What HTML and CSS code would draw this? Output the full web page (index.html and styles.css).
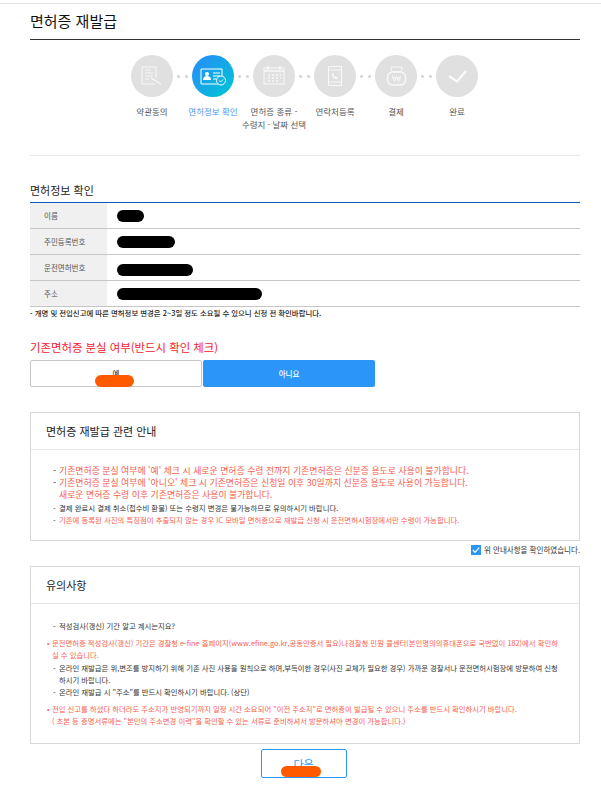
FILE: index.html
```html
<!DOCTYPE html>
<html lang="ko">
<head>
<meta charset="utf-8">
<title>면허증 재발급</title>
<link rel="stylesheet" href="styles.css">
</head>
<body>
<div class="page">
  <h1 class="title">면허증 재발급</h1>

  <div class="stepper">
    <div class="circles">
      <div class="circle"><svg viewBox="0 0 42 42"><g class="ic"><path d="M25 23V12H11v17h13"/><path d="M14 15h6M14 18h8M14 21h8M14 24h4"/><path d="M20 23l10 6" class="thick"/></g></svg></div>
      <div class="dots"><i></i><i></i></div>
      <div class="circle active"><svg viewBox="0 0 42 42"><g class="ic on"><path d="M26 29H9V14h21v7"/><circle cx="15" cy="19" r="2" class="solid"/><path d="M11 25c0-3 2-4 4-4s4 1 4 4z" class="solid"/><path d="M21 18h7M21 21h7M21 24h3"/><circle cx="29" cy="25.500" r="4.500"/><path d="M27 25.500l1.500 1.500 2.500-2.500"/></g></svg></div>
      <div class="dots"><i></i><i></i></div>
      <div class="circle"><svg viewBox="0 0 42 42"><g class="ic"><rect x="11" y="13" width="20" height="16"/><path d="M11 16h20M15 11v4M27 11v4" class="thick"/><path d="M15 20h2M19 20h2M23 20h2M27 20h1M15 23h2M19 23h2M23 23h2M27 23h1M15 26h2M19 26h2M23 26h2" class="thick"/></g></svg></div>
      <div class="dots"><i></i><i></i></div>
      <div class="circle"><svg viewBox="0 0 42 42"><g class="ic"><rect x="14.500" y="11.500" width="13" height="19"/><path d="M15 15h12M15 27h12"/><path d="M18 19c0 3 2 5 5 5l1-1.500-2-1-1 .5-1.500-1.500.5-1-1-2z" class="solid"/></g></svg></div>
      <div class="dots"><i></i><i></i></div>
      <div class="circle"><svg viewBox="0 0 42 42"><g class="ic"><path d="M16 12h11v3l-2 2h-7l-2-2z"/><rect x="12.500" y="17" width="18" height="13" rx="5" class="thick"/><path d="M17.500 20.500l2 6 2-5 2 5 2-6M17 23h9"/></g></svg></div>
      <div class="dots"><i></i><i></i></div>
      <div class="circle"><svg viewBox="0 0 42 42"><path d="M13 21l8 5.500 9-10.500" class="check"/></svg></div>
    </div>
    <div class="labels">
      <div class="label">약관동의</div>
      <div class="label current">면허정보 확인</div>
      <div class="label">면허증 종류 -<br>수령지 · 날짜 선택</div>
      <div class="label">연락처등록</div>
      <div class="label">결제</div>
      <div class="label">완료</div>
    </div>
  </div>

  <h2 class="section-title">면허정보 확인</h2>
  <div class="info">
    <div class="row"><div class="key">이름</div><div class="val"><span class="mask m1"></span></div></div>
    <div class="row"><div class="key">주민등록번호</div><div class="val"><span class="mask m2"></span></div></div>
    <div class="row"><div class="key">운전면허번호</div><div class="val"><span class="mask m3"></span></div></div>
    <div class="row"><div class="key">주소</div><div class="val"><span class="mask m4"></span></div></div>
  </div>
  <p class="note">- 개명 및 전입신고에 따른 면허정보 변경은 2~3일 정도 소요될 수 있으니 신청 전 확인바랍니다.</p>

  <h2 class="lost-title">기존면허증 분실 여부(반드시 확인 체크)</h2>
  <div class="choice">
    <button class="btn yes">예<span class="blot b1"></span></button>
    <button class="btn no">아니요</button>
  </div>

  <section class="box guide">
    <h3 class="box-title">면허증 재발급 관련 안내</h3>
    <ul class="list">
      <li class="big red">기존면허증 분실 여부에 '예' 체크 시 새로운 면허증 수령 전까지 기존면허증은 신분증 용도로 사용이 불가합니다.</li>
      <li class="big red">기존면허증 분실 여부에 '아니오' 체크 시 기존면허증은 신청일 이후 30일까지 신분증 용도로 사용이 가능합니다.<br>새로운 면허증 수령 이후 기존면허증은 사용이 불가합니다.</li>
      <li>결제 완료시 결제 취소(접수비 환불) 또는 수령지 변경은 불가능하므로 유의하시기 바랍니다.</li>
      <li class="red">기존에 등록된 사진의 특징점이 추출되지 않는 경우 IC 모바일 면허증으로 재발급 신청 시 운전면허시험장에서만 수령이 가능합니다.</li>
    </ul>
  </section>
  <div class="agree">
    <span class="tick"><svg viewBox="0 0 11 11"><path d="M2 5.500l2.500 2.500 4.500-5"/></svg></span>
    <span>위 안내사항을 확인하였습니다.</span>
  </div>

  <section class="box caution">
    <h3 class="box-title">유의사항</h3>
    <ul class="list notes">
      <li>적성검사(갱신) 기간 알고 계시는지요?</li>
      <li class="dot red gap">운전면허증 적성검사(갱신) 기간은 경찰청 e-fine 홈페이지(www.efine.go.kr,공동인증서 필요)나경찰청 민원 콜센터(본인명의의휴대폰으로 국번없이 182)에서 확인하<br>실 수 있습니다.</li>
      <li>온라인 재발급은 위,변조를 방지하기 위해 기존 사진 사용을 원칙으로 하며,부득이한 경우(사진 교체가 필요한 경우) 가까운 경찰서나 운전면허시험장에 방문하여 신청<br>하시기 바랍니다.</li>
      <li>온라인 재발급 시 "주소"를 반드시 확인하시기 바랍니다. (상단)</li>
      <li class="dot red gap">전입 신고를 하셨다 하더라도 주소지가 반영되기까지 일정 시간 소요되어 "이전 주소지"로 면허증이 발급될 수 있으니 주소를 반드시 확인하시기 바랍니다.<br>( 초본 등 증명서류에는 "본인의 주소변경 이력"을 확인할 수 있는 서류로 준비하셔서 방문하셔야 변경이 가능합니다.)</li>
    </ul>
  </section>

  <div class="next-wrap">
    <button class="btn-next">다음<span class="blot b2"></span></button>
  </div>
</div>
</body>
</html>
```
FILE: styles.css
```css
* { box-sizing: border-box; }
html, body { margin: 0; padding: 0; background: #fff; }
body {
  font-family: "Noto Sans CJK KR", "Noto Sans", sans-serif;
  color: #222;
  overflow: hidden;
}
.page { margin-top: 3px; border-top: 1px solid #e2e2e2; padding: 0 21px 0 30px; }

.title {
  margin: 0; height: 36px; border-bottom: 1px solid #333;
  font-size: 15px; font-weight: 400; line-height: 34px; color: #111;
}

.stepper { height: 116px; padding: 15px 1px 0 0; border-bottom: 1px solid #e8e8e8; }
.circles { display: flex; justify-content: center; align-items: center; }
.circle { width: 42px; height: 42px; border-radius: 50%; background: #e0e0e0; flex: none; }
.circle svg { display: block; width: 42px; height: 42px; }
.circle.active { background: linear-gradient(135deg, #2196f3 20%, #00c4d4 95%); }
.ic { fill: none; stroke: #f8f8f8; stroke-width: 1; }
.ic.on { stroke: #fff; }
.ic .thick { stroke-width: 1.400; }
.ic .solid { fill: #f8f8f8; stroke: none; }
.ic.on .solid { fill: #fff; }
.check { fill: none; stroke: #fafafa; stroke-width: 2.200; }
.dots { width: 19px; display: flex; justify-content: center; gap: 5px; }
.dots i { width: 3px; height: 3px; border-radius: 50%; background: #d4d4d4; }
.labels { display: flex; justify-content: center; margin-top: 8px; }
.label {
  width: 61px; flex: none; text-align: center; white-space: nowrap;
  display: flex; justify-content: center;
  font-size: 8.500px; line-height: 13px; color: #555;
}
.label.current { color: #4b95f2; }

.section-title { margin: 25px 0 0; height: 21px; font-size: 11px; font-weight: 400; line-height: 18px; color: #222; border-bottom: 0; }
.info { border-top: 1px solid #0b58b5; }
.row { display: grid; grid-template-columns: 77px 1fr; height: 26px; border-bottom: 1px solid #c6c6c6; }
.key { background: #f0f0f0; padding-left: 14px; font-size: 7.500px; line-height: 25px; color: #555; }
.val { padding-left: 10px; display: flex; align-items: center; }
.mask { display: block; height: 12px; border-radius: 6px; background: #000; }
.m1 { width: 27px; } .m2 { width: 58px; } .m3 { width: 76px; position: relative; top: 2px; } .m4 { width: 145px; }

.note { margin: 0; font-size: 7.400px; font-weight: 500; line-height: 12px; color: #222; }

.lost-title { margin: 19px 0 0; font-size: 11.400px; font-weight: 400; line-height: 18px; color: #f5222d; }
.choice { display: flex; gap: 1px; margin-top: 4px; }
.btn {
  position: relative; width: 172px; height: 27px; padding: 0; border-radius: 2px;
  font: 500 7.500px/12px "Noto Sans CJK KR", sans-serif;
}
.btn.yes { background: #fff; border: 1px solid #c8c8c8; color: #444; }
.btn.no { background: #2b96f8; border: 0; color: #fff; }
.blot { position: absolute; background: #ff5a00; border-radius: 6px; height: 12px; }
.b1 { left: 64px; top: 14px; width: 39px; }
.b2 { left: 19px; top: 16px; width: 40px; height: 11px; }

.box { border: 1px solid #d8d8d8; background: #fff; }
.guide { margin-top: 25px; height: 129px; }
.caution { margin-top: 8px; height: 178px; }
.box-title {
  margin: 0; height: 37px; padding-left: 15px;
  border-bottom: 1px solid #e6e6e6;
  font-size: 11px; font-weight: 400; line-height: 36px; color: #222;
}
.list { margin: 0; padding: 15px 0 0 28px; list-style: none; font-size: 7.400px; line-height: 12.200px; color: #333; }
.list li { position: relative; }
.list li::before { content: "-"; position: absolute; left: -6px; color: #333; }
.list .big { font-size: 8.900px; }
.list .red { color: #f8604f; }
.list.notes { padding-top: 16px; font-size: 7.350px; }
.list .gap { margin-top: 5px; }
.list .dot { margin-left: -7px; }
.list .dot::before { content: "•"; left: -5px; color: #f8604f; }

.agree {
  display: flex; justify-content: flex-end; align-items: center; gap: 3px;
  height: 17px;
  font-size: 7.500px; line-height: 12px; color: #333;
}
.tick { width: 10px; height: 10px; background: #2b96f8; flex: none; }
.tick svg { display: block; width: 10px; height: 10px; fill: none; stroke: #fff; stroke-width: 1.300; }

.next-wrap { display: flex; justify-content: center; margin-top: 5px; padding-right: 3px; }
.btn-next {
  position: relative; width: 86px; height: 29px; padding: 0; background: #fff;
  border: 1px solid #2b96f8; border-radius: 2px; color: #2b96f8;
  font: 400 11px/16px "Noto Sans CJK KR", sans-serif;
}
```
